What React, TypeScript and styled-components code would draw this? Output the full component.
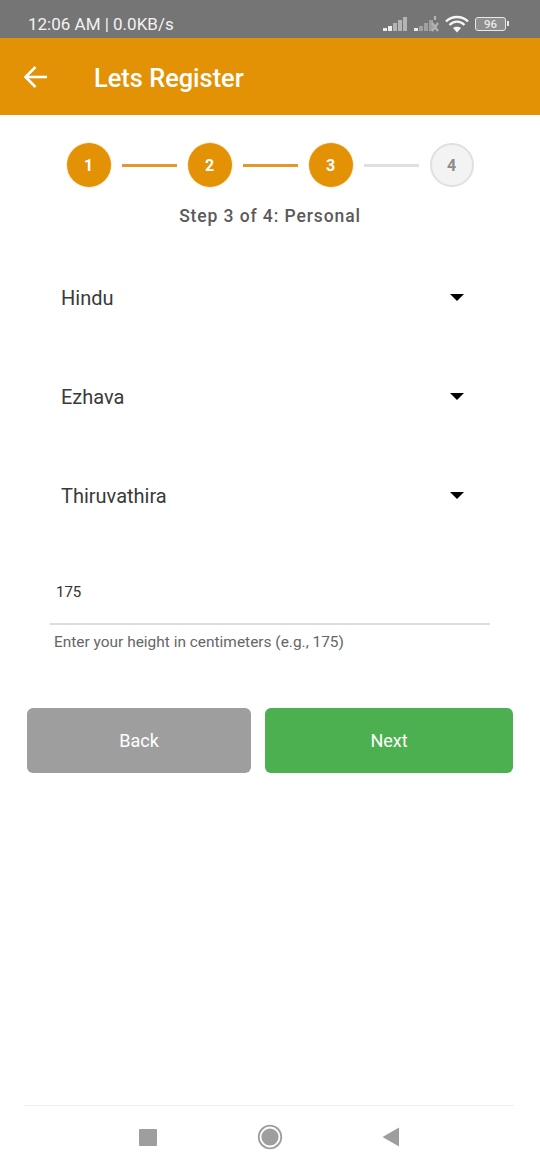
import React from "react";
import styled, { createGlobalStyle } from "styled-components";

const GlobalStyle = createGlobalStyle`
  html, body {
    margin: 0;
    padding: 0;
    background: #fff;
  }
  * {
    box-sizing: border-box;
  }
`;

const Screen = styled.div`
  width: 540px;
  height: 1170px;
  display: flex;
  flex-direction: column;
  background: #fff;
  font-family: Roboto, "Liberation Sans", sans-serif;
  overflow: hidden;
`;

const StatusBar = styled.div`
  height: 38px;
  flex-shrink: 0;
  display: flex;
  align-items: center;
  justify-content: space-between;
  padding: 9px 34px 0 28px;
  background: #757575;
  color: #f2f2f2;
  font-size: 17px;
`;

const StatusIcons = styled.div`
  display: flex;
  align-items: center;
  gap: 3px;
`;

const BatteryBox = styled.div`
  width: 31px;
  height: 14px;
  border: 1.5px solid #e8e8e8;
  border-radius: 3px;
  display: flex;
  align-items: center;
  justify-content: center;
  font-size: 11.5px;
  font-weight: 500;
  color: #e8e8e8;
  background: #8f8f8f;
  position: relative;
  margin-left: 3px;
  &::after {
    content: "";
    position: absolute;
    right: -4px;
    top: 3px;
    width: 2px;
    height: 5px;
    background: #e8e8e8;
  }
`;

const Header = styled.header`
  height: 77px;
  flex-shrink: 0;
  display: flex;
  align-items: center;
  padding-left: 23px;
  background: #e39105;
  color: #fff;
`;

const HeaderTitle = styled.h1`
  margin: 2px 0 0 45px;
  font-size: 25.4px;
  font-weight: 500;
`;

const Stepper = styled.div`
  display: flex;
  align-items: center;
  justify-content: center;
  gap: 11px;
  margin-top: 28px;
`;

const StepCircle = styled.div<{ $active: boolean }>`
  width: 44px;
  height: 44px;
  border-radius: 50%;
  display: flex;
  align-items: center;
  justify-content: center;
  font-size: 16px;
  font-weight: 700;
  background: ${(p) => (p.$active ? "#e39105" : "#f3f3f3")};
  color: ${(p) => (p.$active ? "#fff" : "#8c8c8c")};
  border: ${(p) => (p.$active ? "none" : "2px solid #e0e0e0")};
  box-shadow: ${(p) => (p.$active ? "0 0 0 1px #fdf0d8" : "none")};
`;

const StepLine = styled.div<{ $active: boolean }>`
  width: 55px;
  height: 3px;
  background: ${(p) => (p.$active ? "#e0992a" : "#e0e0e0")};
`;

const StepLabel = styled.div`
  margin-top: 17px;
  text-align: center;
  font-size: 17.5px;
  line-height: 24px;
  font-weight: 500;
  letter-spacing: 0.9px;
  color: #5a5a5a;
`;

const SelectList = styled.div`
  display: flex;
  flex-direction: column;
  margin-top: 20px;
`;

const SelectRow = styled.div`
  height: 99px;
  display: flex;
  align-items: center;
  justify-content: space-between;
  padding: 0 76px 0 61px;
  font-size: 20px;
  color: #3a3a3a;
`;

const Caret = styled.span`
  width: 0;
  height: 0;
  border-left: 7px solid transparent;
  border-right: 7px solid transparent;
  border-top: 7px solid #000;
`;

const HeightField = styled.div`
  margin: 20px 50px 0;
  height: 60px;
  padding: 17px 0 0 6px;
  border-bottom: 2px solid #ddd;
  font-size: 15px;
  line-height: 20px;
  color: #333;
`;

const HelperText = styled.div`
  margin: 7px 0 0 54px;
  font-size: 15.45px;
  line-height: 20px;
  color: #666;
`;

const ButtonRow = styled.div`
  display: flex;
  gap: 14px;
  margin: 56px 27px 0;
`;

const ActionButton = styled.button<{ $variant: "back" | "next" }>`
  height: 65px;
  width: ${(p) => (p.$variant === "back" ? "224px" : "248px")};
  border: none;
  border-radius: 6px;
  font-family: inherit;
  font-size: 18px;
  color: #fff;
  background: ${(p) => (p.$variant === "back" ? "#9e9e9e" : "#4caf50")};
`;

const NavBar = styled.nav`
  margin: auto 26px 0 24px;
  height: 65px;
  border-top: 1px solid #efefef;
  display: flex;
  align-items: center;
  padding: 0 0 2px 115px;
  gap: 99.5px;
`;

const NavSquare = styled.div`
  width: 18px;
  height: 17px;
  border-radius: 1px;
  background: #9e9e9e;
`;

const steps = [1, 2, 3, 4];
const currentStep = 3;
const selects = ["Hindu", "Ezhava", "Thiruvathira"];

const SignalIcon = ({ off }: { off?: boolean }) => (
  <svg width="28" height="16" viewBox="0 0 28 16">
    <g fill={off ? "#a0a0a0" : "#b4b4b4"}>
      <rect x="0" y="12" width="4" height="3" fill="#ececec" />
      <rect x="5" y="10" width="4" height="5" fill={off ? "#a0a0a0" : "#ececec"} />
      <rect x="10" y="7" width="4" height="8" />
      <rect x="15" y="4" width="4" height="11" />
      {!off && <rect x="20" y="1" width="4" height="14" />}
    </g>
    {off && (
      <path d="M18 7l6 8M24 7l-6 8M21 0v4" stroke="#b4b4b4" strokeWidth="2.2" fill="none" />
    )}
  </svg>
);

const WifiIcon = () => (
  <svg width="24" height="18" viewBox="0 0 24 18" fill="none" stroke="#f5f5f5" strokeWidth="2.4">
    <path d="M1 6.5C7 0.5 17 0.5 23 6.5" />
    <path d="M4.5 10C9 5.5 15 5.5 19.5 10" />
    <path d="M8 13C10 11.3 14 11.3 16 13L12 17.5z" fill="#f5f5f5" stroke="none" />
  </svg>
);

const BackArrow = () => (
  <svg width="26" height="26" viewBox="0 0 26 26" fill="none" stroke="#fff" strokeWidth="2.6">
    <path d="M24 13H3" />
    <path d="M12.5 3L2.5 13l10 10" />
  </svg>
);

const NavHome = () => (
  <svg width="26" height="26" viewBox="0 0 26 26">
    <circle cx="13" cy="13" r="11.3" fill="none" stroke="#9e9e9e" strokeWidth="1.8" />
    <circle cx="13" cy="13" r="8.6" fill="#9e9e9e" />
  </svg>
);

const NavBack = () => (
  <svg width="18" height="20" viewBox="0 0 18 20">
    <path d="M17 0.5v19L0.5 10z" fill="#9e9e9e" />
  </svg>
);

export default function App() {
  return (
    <Screen>
      <GlobalStyle />
      <StatusBar>
        <span>12:06 AM | 0.0KB/s</span>
        <StatusIcons>
          <SignalIcon />
          <SignalIcon off />
          <WifiIcon />
          <BatteryBox>96</BatteryBox>
        </StatusIcons>
      </StatusBar>
      <Header>
        <BackArrow />
        <HeaderTitle>Lets Register</HeaderTitle>
      </Header>
      <Stepper>
        {steps.map((n) => (
          <React.Fragment key={n}>
            <StepCircle $active={n <= currentStep}>{n}</StepCircle>
            {n < steps.length && <StepLine $active={n < currentStep} />}
          </React.Fragment>
        ))}
      </Stepper>
      <StepLabel>Step 3 of 4: Personal</StepLabel>
      <SelectList>
        {selects.map((s) => (
          <SelectRow key={s}>
            {s}
            <Caret />
          </SelectRow>
        ))}
      </SelectList>
      <HeightField>175</HeightField>
      <HelperText>Enter your height in centimeters (e.g., 175)</HelperText>
      <ButtonRow>
        <ActionButton $variant="back">Back</ActionButton>
        <ActionButton $variant="next">Next</ActionButton>
      </ButtonRow>
      <NavBar>
        <NavSquare />
        <NavHome />
        <NavBack />
      </NavBar>
    </Screen>
  );
}
